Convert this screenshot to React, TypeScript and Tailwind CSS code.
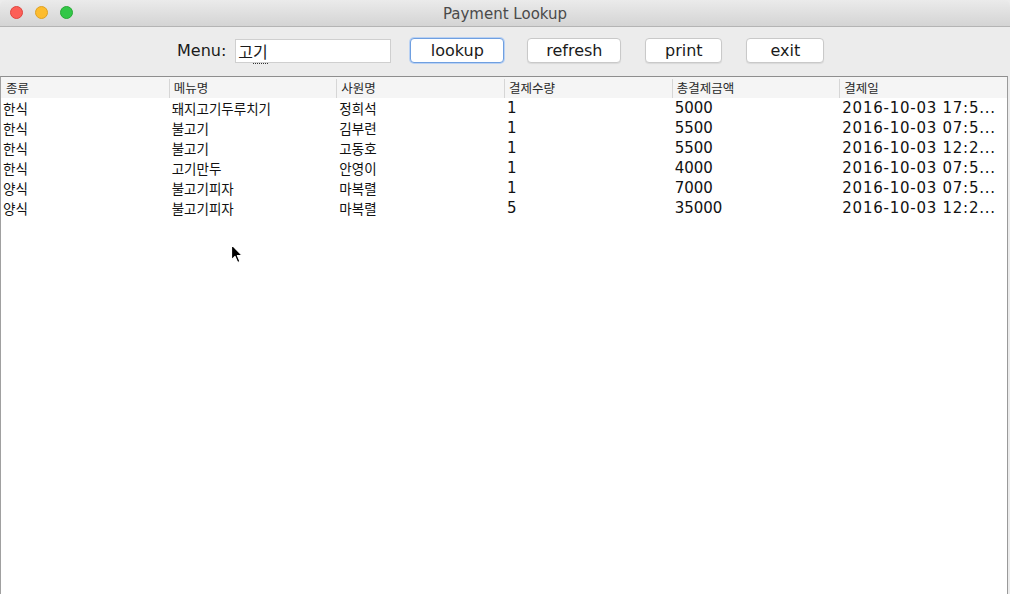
const rows = [
  ['한식', '돼지고기두루치기', '정희석', '1', '5000', '2016-10-03 17:5...'],
  ['한식', '불고기', '김부련', '1', '5500', '2016-10-03 07:5...'],
  ['한식', '불고기', '고동호', '1', '5500', '2016-10-03 12:2...'],
  ['한식', '고기만두', '안영이', '1', '4000', '2016-10-03 07:5...'],
  ['양식', '불고기피자', '마복렬', '1', '7000', '2016-10-03 07:5...'],
  ['양식', '불고기피자', '마복렬', '5', '35000', '2016-10-03 12:2...'],
];

const headers = ['종류', '메뉴명', '사원명', '결제수량', '총결제금액', '결제일'];

const ko = "font-['Noto_Sans_CJK_KR',sans-serif]";
const latin = "font-['DejaVu_Sans','Noto_Sans_CJK_KR',sans-serif]";

const App = () => {
  return (
    <div className="relative w-[1010px] h-[594px] overflow-hidden bg-[#ececec] flex flex-col">
      {/* 타이틀바 */}
      <div className="relative h-[27px] shrink-0 rounded-t-[6px] bg-gradient-to-b from-[#ebebeb] to-[#d4d4d4] border-b border-[#b4b4b4] flex items-center justify-center pt-[2px]">
        <div className="absolute left-[10px] top-[6px] flex gap-[12px]">
          <div className="w-[13px] h-[13px] rounded-full bg-[#fc5f57] border border-[#e0443e]"></div>
          <div className="w-[13px] h-[13px] rounded-full bg-[#fdbc2e] border border-[#dea123]"></div>
          <div className="w-[13px] h-[13px] rounded-full bg-[#33c748] border border-[#27aa35]"></div>
        </div>
        <span className={`${latin} text-[15px] text-[#4a4a4a]`}>Payment Lookup</span>
      </div>

      {/* 툴바 */}
      <div className={`h-[49px] shrink-0 flex items-center pl-[177px] pb-[2px] ${latin} text-[16px] text-[#1a1a1a]`}>
        <span>Menu:</span>
        <div className="ml-[9px] w-[156px] h-[24px] bg-white border border-[#cfcfcf] flex items-center pl-[2px]">
          <span className={`${ko} text-[16px] leading-none`}>
            고<span className="border-b border-dotted border-[#333]">기</span>
          </span>
        </div>
        <button className="ml-[19px] w-[94px] h-[25px] bg-white rounded-[4px] border border-[#6f9fe0] shadow-[0_0_0_1px_#b9d1f3]">lookup</button>
        <button className="ml-[23px] w-[94px] h-[25px] bg-white rounded-[4px] border border-[#c9c9c9] shadow-[0_1px_1px_rgba(0,0,0,0.08)]">refresh</button>
        <button className="ml-[24px] w-[77px] h-[25px] bg-white rounded-[4px] border border-[#c9c9c9] shadow-[0_1px_1px_rgba(0,0,0,0.08)]">print</button>
        <button className="ml-[24px] w-[78px] h-[25px] bg-white rounded-[4px] border border-[#c9c9c9] shadow-[0_1px_1px_rgba(0,0,0,0.08)]">exit</button>
      </div>

      {/* 테이블 */}
      <div className="flex-1 mr-[2px] bg-white border-t border-l border-r border-t-[#8e8e8e] border-l-[#a0a0a0] border-r-[#9a9a9a]">
        <div className="grid grid-cols-6 h-[21px] bg-[#f5f5f5]">
          {headers.map((h, i) => (
            <div key={h} className={`flex items-center ${i === 0 ? 'pl-[5px]' : 'pl-[4px] border-l border-[#d6d6d6]'} ${ko} text-[12.5px] text-[#2a2a2a] my-[2px]`}>
              {h}
            </div>
          ))}
        </div>
        {rows.map((r, ri) => (
          <div key={ri} className="grid grid-cols-6 h-[20px] text-[#111]">
            {r.map((c, ci) => (
              <div
                key={ci}
                className={`flex items-center whitespace-nowrap overflow-hidden ${ci === 0 ? 'pl-[2px]' : 'pl-[3px]'} ${
                  ci < 3 ? `${ko} text-[13.5px]` : `${latin} text-[15px]`
                } ${ci === 5 ? 'tracking-[0.75px]' : ''}`}
              >
                {c}
              </div>
            ))}
          </div>
        ))}
      </div>

      {/* 마우스 커서 */}
      <svg className="absolute left-[230px] top-[243px]" width="14" height="22" viewBox="0 0 14 22">
        <path d="M1.5 1.5 L1.5 17 L5 13.5 L7.6 19.5 L10 18.5 L7.4 12.6 L12.3 12.6 Z" fill="#000" stroke="#fff" strokeWidth="1.2" strokeLinejoin="round" />
      </svg>
    </div>
  );
};

export default App;
